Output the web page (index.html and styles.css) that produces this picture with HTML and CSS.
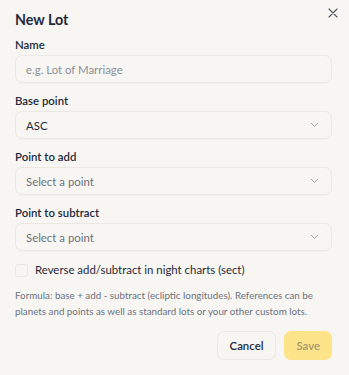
FILE: index.html
```html
<!DOCTYPE html>
<html lang="en">
<head>
    <meta charset="UTF-8" />
    <meta name="viewport" content="width=device-width, initial-scale=1.0" />
    <title>New Lot</title>
    <link rel="stylesheet" href="styles.css">
</head>
<body>
    <div class="dialog">
        <button class="close" aria-label="Close">
            <svg width="10" height="10" viewBox="0 0 10 10"><path d="M1 1L9 9M9 1L1 9" stroke="#4b5563" stroke-width="1.1" fill="none" stroke-linecap="round"/></svg>
        </button>
        <h2 class="title">New Lot</h2>

        <div class="field">
            <label>Name</label>
            <input type="text" class="control" placeholder="e.g. Lot of Marriage" />
        </div>

        <div class="field">
            <label>Base point</label>
            <div class="control select"><span>ASC</span><svg class="chev" width="9" height="6" viewBox="0 0 9 6"><path d="M1 1L4.5 4.5L8 1" stroke="#a0a4ab" stroke-width="1" fill="none"/></svg></div>
        </div>

        <div class="field">
            <label>Point to add</label>
            <div class="control select placeholder"><span>Select a point</span><svg class="chev" width="9" height="6" viewBox="0 0 9 6"><path d="M1 1L4.5 4.5L8 1" stroke="#a0a4ab" stroke-width="1" fill="none"/></svg></div>
        </div>

        <div class="field">
            <label>Point to subtract</label>
            <div class="control select placeholder"><span>Select a point</span><svg class="chev" width="9" height="6" viewBox="0 0 9 6"><path d="M1 1L4.5 4.5L8 1" stroke="#a0a4ab" stroke-width="1" fill="none"/></svg></div>
        </div>

        <label class="check"><span class="box"></span>Reverse add/subtract in night charts (sect)</label>

        <p class="hint">Formula: base + add - subtract (ecliptic longitudes). References can be planets and points as well as standard lots or your other custom lots.</p>

        <div class="actions">
            <button class="btn cancel">Cancel</button>
            <button class="btn save">Save</button>
        </div>
    </div>
</body>
</html>
```

FILE: styles.css
```css
:root {
    --fondo: #f8f6f2;
    --borde: #ebe8e2;
    --texto: #1e2a3b;
    --gris: #6b7280;
}

body {
    margin: 0;
    font-family: 'Lato', sans-serif;
    background: var(--fondo);
    color: var(--texto);
}

.dialog {
    position: relative;
    padding: 10px 17px 0 15px;
}

.title {
    margin: 0 0 8px;
    font-size: 14.3px;
    font-weight: 700;
    line-height: 20px;
}

.close {
    position: absolute;
    top: 6px;
    right: 9px;
    width: 14px;
    height: 14px;
    padding: 0;
    border: none;
    background: none;
    display: flex;
    align-items: center;
    justify-content: center;
}

.field {
    margin-bottom: 11px;
}

.field label {
    display: block;
    font-size: 11.4px;
    font-weight: 600;
    line-height: 14px;
    margin-bottom: 3px;
}

.control {
    box-sizing: border-box;
    width: 100%;
    height: 28px;
    padding: 0 10px;
    border: 1px solid var(--borde);
    border-radius: 7px;
    background: var(--fondo);
    font-family: inherit;
    font-size: 11.4px;
    color: var(--texto);
    box-shadow: 0 1px 1px rgba(0,0,0,0.02);
}

    .control::placeholder {
        color: #8a8f98;
    }

.select {
    display: flex;
    align-items: center;
    justify-content: space-between;
}

.placeholder span {
    color: #6b7280;
}

.chev {
    margin-right: 2px;
}

.check {
    display: flex;
    align-items: center;
    gap: 7px;
    margin-top: 1px;
    font-size: 11.4px;
    line-height: 16px;
}

.box {
    width: 11px;
    height: 11px;
    border: 1px solid var(--borde);
    border-radius: 3px;
    background: var(--fondo);
}

.hint {
    margin: 9px 0 0;
    font-size: 9.8px;
    line-height: 16px;
    color: var(--gris);
}

.actions {
    display: flex;
    justify-content: flex-end;
    gap: 8px;
    margin-top: 12px;
}

.btn {
    height: 29px;
    padding: 0 12px;
    border-radius: 7px;
    font-family: inherit;
    font-size: 11.4px;
    font-weight: 600;
}

.cancel {
    border: 1px solid var(--borde);
    background: var(--fondo);
    color: var(--texto);
}

.save {
    border: none;
    background: #fde48b;
    color: #a59869;
}
```
